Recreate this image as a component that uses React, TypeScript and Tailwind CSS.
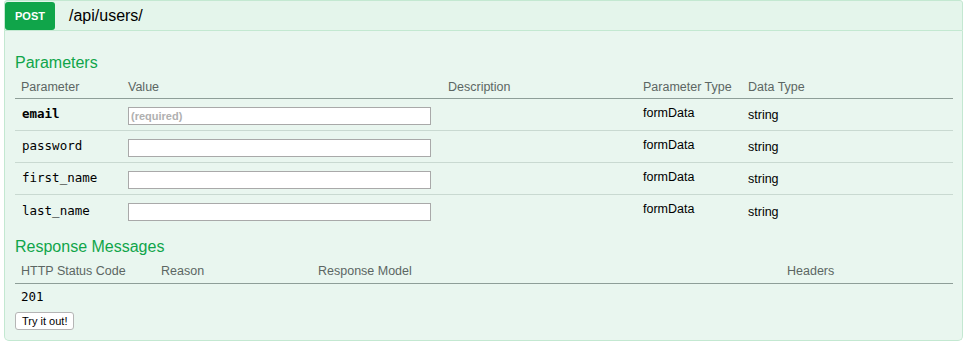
const params = [
  { name: 'email', required: true },
  { name: 'password', required: false },
  { name: 'first_name', required: false },
  { name: 'last_name', required: false },
]

const paramCols = 'grid grid-cols-[113px_320px_195px_105px_1fr]'
const respCols = 'grid grid-cols-[140px_157px_469px_1fr]'

function ParamRow({ name, required, last }: { name: string; required: boolean; last: boolean }) {
  return (
    <div className={`${paramCols} h-[32px] items-center ${last ? '' : 'border-b border-[#c9d9d1]'}`}>
      <div
        className={`pl-[7px] text-[12.5px] text-black font-['DejaVu_Sans_Mono',monospace] ${required ? 'font-bold' : ''}`}
      >
        {name}
      </div>
      <div>
        <input
          className="w-[303px] h-[18px] bg-white border border-[#a9a9a9] px-[2px] text-[11px] font-bold placeholder:text-[#b0b0b0] outline-none"
          placeholder={required ? '(required)' : ''}
        />
      </div>
      <div />
      <div className="text-[12.5px] text-black -mt-[3px]">formData</div>
      <div className="text-[12.5px] text-black mt-[2px]">string</div>
    </div>
  )
}

export default function App() {
  return (
    <div className="w-[968px] h-[345px] bg-white pl-[4px] pr-[5px] font-['Liberation_Sans',Arial,sans-serif]">
      <div className="h-[31px] bg-[#e4f5eb] border border-[#c3e8d1] flex items-center rounded-t-[3px]">
        <div className="mt-[1px] w-[50px] h-[28px] bg-[#10a54a] rounded-[3px] text-white text-[11px] font-bold flex items-center justify-center">
          POST
        </div>
        <div className="ml-[14px] text-[16px] text-black">/api/users/</div>
      </div>

      <div className="h-[310px] bg-[#e9f6ef] border border-t-0 border-[#c3e8d1] rounded-b-[5px] pl-[10px] pt-[22px]">
        <div className="text-[16px] leading-[20px] text-[#10a54a]">Parameters</div>

        <div className="w-[938px] mt-[3px]">
          <div className={`${paramCols} h-[23px] items-center border-b border-[#8e9e98] text-[12.5px] text-[#5c6663]`}>
            <div className="pl-[6px]">Parameter</div>
            <div>Value</div>
            <div>Description</div>
            <div>Parameter Type</div>
            <div>Data Type</div>
          </div>
          {params.map((p, i) => (
            <ParamRow key={p.name} name={p.name} required={p.required} last={i === params.length - 1} />
          ))}
        </div>

        <div className="text-[16px] leading-[20px] text-[#10a54a] mt-[10px]">Response Messages</div>

        <div className="w-[938px] mt-[2px]">
          <div className={`${respCols} h-[25px] items-center border-b border-[#8e9e98] text-[12.5px] text-[#5c6663]`}>
            <div className="pl-[6px]">HTTP Status Code</div>
            <div className="pl-[6px]">Reason</div>
            <div className="pl-[6px]">Response Model</div>
            <div className="pl-[6px]">Headers</div>
          </div>
          <div className={`${respCols} h-[26px] items-center`}>
            <div className="pl-[6px] text-[12.5px] text-black font-['DejaVu_Sans_Mono',monospace]">201</div>
            <div />
            <div />
            <div />
          </div>
        </div>

        <button className="block mt-[2px] h-[18px] px-[6px] bg-white border border-[#b5b5b5] rounded-[3px] text-[11px] text-black leading-none">
          Try it out!
        </button>
      </div>
    </div>
  )
}
